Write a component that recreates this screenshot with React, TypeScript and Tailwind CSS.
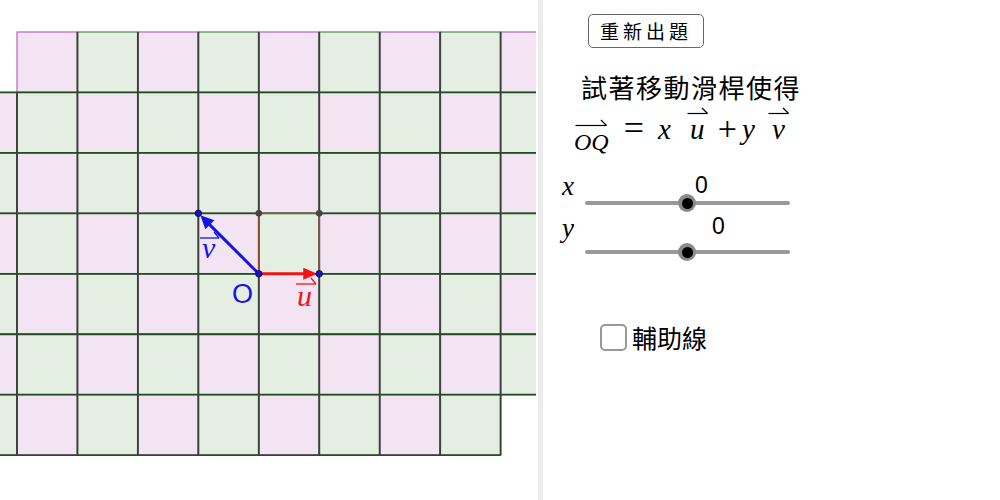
import React from "react";

const S = 60.45;
const X0 = 17;
const Y0 = 32;
const PINK = "#f2e4f2";
const GREEN = "#e5eee2";
const LINE = "#2e4a2e";

const SERIF = "font-['Liberation_Serif','DejaVu_Serif',serif]";
const CJK = "font-['Noto_Sans_CJK_TC','Noto_Sans_CJK_SC',sans-serif]";

// which columns each row covers: [from, to]
const ROWS: [number, number][] = [
  [0, 8],
  [-1, 8],
  [-1, 8],
  [-1, 8],
  [-1, 8],
  [-1, 8],
  [-1, 7],
];

function Harpoon({ w }: { w: number }) {
  return (
    <svg width={w} height="8" viewBox={`0 0 ${w} 8`} className="block">
      <line x1="0.5" y1="6.5" x2={w - 0.5} y2="6.5" stroke="currentColor" strokeWidth="1.2" />
      <line x1={w - 6} y1="1" x2={w - 0.5} y2="6.5" stroke="currentColor" strokeWidth="1.2" />
    </svg>
  );
}

function Board() {
  const cells: React.ReactNode[] = [];
  ROWS.forEach(([a, b], j) => {
    for (let i = a; i <= b; i++) {
      const pink = (((i + j) % 2) + 2) % 2 === 0;
      cells.push(
        <rect
          key={`${i}-${j}`}
          x={X0 + i * S}
          y={Y0 + j * S}
          width={S}
          height={S}
          fill={pink ? PINK : GREEN}
          stroke={pink ? "#b764b7" : "#4d8a4d"}
          strokeWidth="1.2"
        />
      );
    }
  });

  const lines: React.ReactNode[] = [];
  for (let j = 1; j <= 6; j++) {
    lines.push(
      <line key={`h${j}`} x1="0" x2="536" y1={Y0 + j * S} y2={Y0 + j * S} stroke="#1f4f1f" strokeWidth="1.8" />
    );
  }
  lines.push(
    <line key="h7" x1="0" x2={X0 + 8 * S} y1={Y0 + 7 * S} y2={Y0 + 7 * S} stroke={LINE} strokeWidth="1.6" />
  );
  for (let i = 0; i <= 8; i++) {
    lines.push(
      <line
        key={`v${i}`}
        x1={X0 + i * S}
        x2={X0 + i * S}
        y1={i === 0 ? Y0 + S : Y0}
        y2={Y0 + 7 * S}
        stroke="#3a403a"
        strokeWidth="1.9"
      />
    );
  }

  const ox = X0 + 4 * S;
  const oy = Y0 + 4 * S;

  return (
    <svg width="536" height="500" viewBox="0 0 536 500" className="block shrink-0">
      <defs>
        <clipPath id="c">
          <rect x="0" y="0" width="536" height="500" />
        </clipPath>
      </defs>
      <g clipPath="url(#c)">
        {cells}
        {lines}
        {/* helper square */}
        <rect x={ox} y={oy - S} width={S} height={S} fill="none" stroke="#a0522d" strokeWidth="1.3" />
        {/* u */}
        <line x1={ox} y1={oy} x2={ox + S - 12} y2={oy} stroke="#f01414" strokeWidth="3" />
        <polygon points={`${ox + S - 2},${oy} ${ox + S - 16},${oy - 6} ${ox + S - 16},${oy + 6}`} fill="#f01414" />
        {/* v */}
        <line x1={ox} y1={oy} x2={ox - S + 9} y2={oy - S + 9} stroke="#1414e6" strokeWidth="3" />
        <polygon
          points={`${ox - S + 2},${oy - S + 2} ${ox - S + 16},${oy - S + 7} ${ox - S + 7},${oy - S + 16}`}
          fill="#1414e6"
        />
        <circle cx={ox} cy={oy - S} r="3.3" fill="#444" />
        <circle cx={ox + S} cy={oy - S} r="3.3" fill="#444" />
        <circle cx={ox} cy={oy} r="3.3" fill="#1414d0" stroke="#000" strokeWidth="0.6" />
        <circle cx={ox + S} cy={oy} r="3.3" fill="#1414d0" stroke="#000" strokeWidth="0.6" />
        <circle cx={ox - S} cy={oy - S} r="3.3" fill="#1414d0" stroke="#000" strokeWidth="0.6" />
        <text x="232" y="303" fill="#1414e6" fontSize="27" fontFamily="Liberation Sans, sans-serif">
          O
        </text>
        <g stroke="#1414e6" strokeWidth="1.3">
          <line x1="200" y1="238" x2="219" y2="238" />
          <line x1="214" y1="232" x2="219" y2="238" />
        </g>
        <text x="202" y="258" fill="#1414e6" fontSize="30" fontStyle="italic" fontFamily="Liberation Serif, serif">
          v
        </text>
        <g stroke="#f01414" strokeWidth="1.3">
          <line x1="296" y1="284" x2="316" y2="284" />
          <line x1="311" y1="278" x2="316" y2="284" />
        </g>
        <text x="297" y="306" fill="#f01414" fontSize="30" fontStyle="italic" fontFamily="Liberation Serif, serif">
          u
        </text>
      </g>
    </svg>
  );
}

function Slider({
  name,
  labelTop,
  trackTop,
  valueLeft,
  valueTop,
  height,
}: {
  name: string;
  labelTop: number;
  trackTop: number;
  valueLeft: number;
  valueTop: number;
  height: number;
}) {
  return (
    <div className="relative w-[260px]" style={{ height }}>
      <span
        className={`absolute left-[19px] text-[27px] italic leading-none ${SERIF}`}
        style={{ top: labelTop }}
      >
        {name}
      </span>
      <span
        className="absolute font-['Liberation_Sans',sans-serif] text-[23px] leading-none text-black"
        style={{ left: valueLeft, top: valueTop }}
      >
        0
      </span>
      <div className="absolute left-[42px] h-[4px] w-[205px] rounded-full bg-[#999]" style={{ top: trackTop }} />
      <div
        className="absolute left-[135px] flex h-[18px] w-[18px] items-center justify-center rounded-full bg-[#8a8a8a]"
        style={{ top: trackTop - 7 }}
      >
        <div className="h-[11px] w-[11px] rounded-full bg-black" />
      </div>
    </div>
  );
}

export default function App() {
  return (
    <div className="flex h-[500px] w-[1000px] overflow-hidden bg-white text-black">
      <Board />
      <div className="ml-[2px] h-full w-[5px] shrink-0 bg-[#ececec]" />
      <div className="flex flex-1 flex-col">
        <button
          className={`ml-[45px] mt-[14px] h-[34px] w-[116px] rounded-[5px] border-[1.5px] border-[#666] bg-white text-[19px] tracking-[4px] ${CJK}`}
        >
          重新出題
        </button>
        <div className={`ml-[38px] mt-[24px] h-[30px] text-[26px] leading-[30px] tracking-[1.5px] ${CJK}`}>
          試著移動滑桿使得
        </div>
        <div className={`ml-[31px] mt-[6px] flex h-[46px] items-end text-[29px] italic leading-none ${SERIF}`}>
          <span className="inline-flex flex-col items-center">
            <Harpoon w={32} />
            <span className="mt-[3px] text-[24px]">OQ</span>
          </span>
          <span className="ml-[15px] mb-[8px] text-[36px] not-italic">=</span>
          <span className="ml-[14px] mb-[10px]">x</span>
          <span className="ml-[16px] mb-[10px] inline-flex flex-col items-center">
            <Harpoon w={21} />
            <span className="mt-[0px]">u</span>
          </span>
          <span className="ml-[10px] mb-[8px] text-[34px] not-italic">+</span>
          <span className="ml-[5px] mb-[10px]">y</span>
          <span className="ml-[13px] mb-[10px] inline-flex flex-col items-center">
            <Harpoon w={21} />
            <span className="mt-[0px]">v</span>
          </span>
        </div>
        <div className="mt-[16px]">
          <Slider name="x" labelTop={3} trackTop={31} valueLeft={152} valueTop={4} height={44} />
          <Slider name="y" labelTop={1} trackTop={36} valueLeft={169} valueTop={1} height={48} />
        </div>
        <label className="ml-[57px] mt-[62px] flex items-center gap-[5px]">
          <span className="h-[27px] w-[27px] rounded-[5px] border-[2px] border-[#999] bg-white" />
          <span className={`text-[25px] leading-none ${CJK}`}>輔助線</span>
        </label>
      </div>
    </div>
  );
}
